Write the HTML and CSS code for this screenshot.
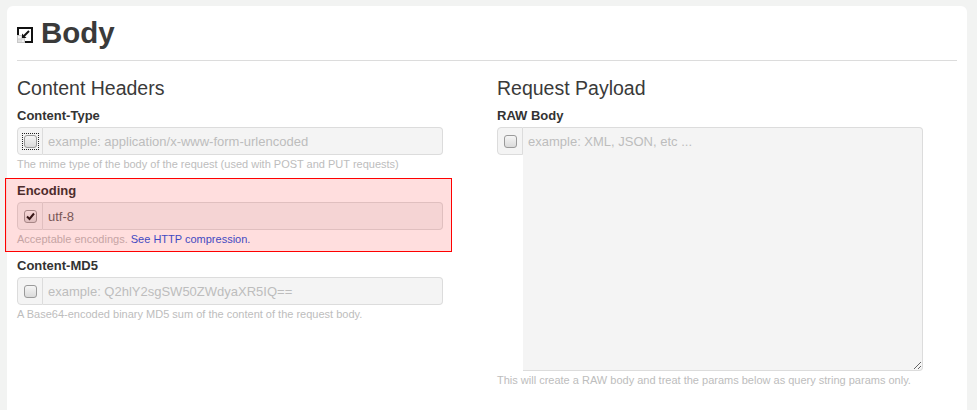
FILE: index.html
```html
<!DOCTYPE html>
<html>
<head>
<meta charset="utf-8">
<title>Body</title>
<link rel="stylesheet" href="styles.css">
</head>
<body>
<div class="card">
  <h1 class="title">
    <svg class="title-icon" width="16" height="16" viewBox="0 0 16 16">
      <rect x="0" y="8" width="8" height="8" fill="#c8c8c8"/>
      <rect x="1" y="9" width="3" height="2.5" fill="#f2f2f2"/>
      <rect x="4.5" y="9" width="2.5" height="2.5" fill="#e0e0e0"/>
      <rect x="1" y="12.5" width="3" height="2.5" fill="#e0e0e0"/>
      <rect x="4.5" y="12.5" width="2.5" height="2.5" fill="#f2f2f2"/>
      <path d="M1 8 V1 H15 V15 H8" fill="none" stroke="#111" stroke-width="2"/>
      <path d="M12 4 L7 9" stroke="#111" stroke-width="2"/>
      <path d="M5 6.5 V11 H9.5 Z" fill="#111"/>
    </svg>
    <span>Body</span>
  </h1>
  <hr class="rule">
  <div class="cols">
    <div class="col">
      <h3 class="section">Content Headers</h3>

      <div class="group">
        <label class="label">Content-Type</label>
        <div class="ig">
          <span class="addon"><span class="cb focus"></span></span>
          <input class="field" type="text" placeholder="example: application/x-www-form-urlencoded">
        </div>
        <p class="help">The mime type of the body of the request (used with POST and PUT requests)</p>
      </div>

      <div class="group hl">
        <label class="label">Encoding</label>
        <div class="ig">
          <span class="addon"><span class="cb checked"><svg width="11" height="11" viewBox="0 0 11 11"><path d="M2 5.5 L4.5 8 L9 2.5" fill="none" stroke="#1a1a1a" stroke-width="2"/></svg></span></span>
          <input class="field" type="text" value="utf-8">
        </div>
        <p class="help">Acceptable encodings. <a class="link" href="#">See HTTP compression.</a></p>
      </div>

      <div class="group">
        <label class="label">Content-MD5</label>
        <div class="ig">
          <span class="addon"><span class="cb"></span></span>
          <input class="field" type="text" placeholder="example: Q2hlY2sgSW50ZWdyaXR5IQ==">
        </div>
        <p class="help">A Base64-encoded binary MD5 sum of the content of the request body.</p>
      </div>
    </div>

    <div class="col">
      <h3 class="section">Request Payload</h3>
      <div class="group">
        <label class="label">RAW Body</label>
        <div class="ig ig-area">
          <span class="addon"><span class="cb"></span></span>
          <textarea class="area" placeholder="example: XML, JSON, etc ..."></textarea>
        </div>
        <p class="help">This will create a RAW body and treat the params below as query string params only.</p>
      </div>
    </div>
  </div>
</div>
</body>
</html>
```

FILE: styles.css
```css
html, body {
  margin: 0;
  padding: 0;
  background: #f2f3f2;
  font-family: "Liberation Sans", Arial, sans-serif;
  color: #333;
  overflow: hidden;
}

.card {
  margin: 6px 10px 0 7px;
  padding: 10px 10px 0 10px;
  background: #fff;
  border-radius: 6px;
  min-height: 420px;
  box-sizing: border-box;
}

.title {
  margin: 0;
  display: flex;
  align-items: center;
  gap: 8px;
  font-size: 29.5px;
  line-height: 33px;
  font-weight: bold;
  color: #3a3a3a;
}

.title-icon {
  margin-top: 4px;
  flex: none;
}

.rule {
  margin: 11px 0 16px;
  border: 0;
  border-top: 1px solid #dcdcdc;
  height: 0;
}

.cols {
  display: grid;
  grid-template-columns: 426px 426px;
  column-gap: 54px;
}

.section {
  margin: 0 0 8px;
  font-size: 19.5px;
  line-height: 22px;
  font-weight: normal;
  color: #3a3a3a;
}

.group {
  margin-bottom: 10px;
}

.hl {
  position: relative;
}

.hl::after {
  content: "";
  position: absolute;
  top: -4px;
  bottom: -5px;
  left: -12px;
  right: -9px;
  background: rgba(255, 0, 0, 0.13);
  border: 1px solid #f00;
  pointer-events: none;
}

.label {
  display: block;
  margin-bottom: 2px;
  font-size: 13px;
  line-height: 18px;
  font-weight: bold;
  color: #333;
}

.ig {
  display: flex;
  height: 28px;
}

.ig-area {
  height: auto;
  align-items: flex-start;
}

.addon {
  flex: none;
  width: 26px;
  height: 28px;
  box-sizing: border-box;
  display: flex;
  align-items: center;
  justify-content: center;
  background: #f4f4f4;
  border: 1px solid #dcdcdc;
  border-radius: 4px 0 0 4px;
}

.field {
  flex: none;
  width: 400px;
  height: 28px;
  box-sizing: border-box;
  margin: 0;
  padding: 0 5px;
  border: 1px solid #dcdcdc;
  border-left: 0;
  border-radius: 0 4px 4px 0;
  background: #f4f4f4;
  font-family: "Liberation Sans", Arial, sans-serif;
  font-size: 13px;
  color: #666;
  outline: none;
}

.field::placeholder,
.area::placeholder {
  color: #bdbdbd;
  opacity: 1;
}

.area {
  flex: none;
  width: 400px;
  height: 244px;
  box-sizing: border-box;
  margin: 0;
  padding: 5px 5px;
  border: 1px solid #dcdcdc;
  border-left: 0;
  border-radius: 0 4px 4px 0;
  background: #f4f4f4;
  font-family: "Liberation Sans", Arial, sans-serif;
  font-size: 13px;
  line-height: 18px;
  color: #666;
  outline: none;
  resize: both;
  display: block;
}

.cb {
  position: relative;
  width: 13px;
  height: 13px;
  box-sizing: border-box;
  border: 1px solid #9a9a9a;
  border-radius: 3px;
  background: linear-gradient(#f6f6f6, #dadada);
  display: flex;
  align-items: center;
  justify-content: center;
}

.cb.focus::before {
  content: "";
  position: absolute;
  top: -3px;
  left: -3px;
  right: -3px;
  bottom: -3px;
  border: 1px dotted #222;
}

.cb svg {
  display: block;
}

.help {
  margin: 1px 0 0;
  font-size: 11px;
  line-height: 16px;
  color: #bdbdbd;
}

.link {
  color: #1f55e0;
  text-decoration: none;
}
```
